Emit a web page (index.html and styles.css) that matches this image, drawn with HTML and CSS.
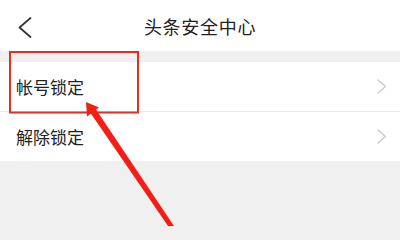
FILE: index.html
```html
<!DOCTYPE html>
<html lang="zh-CN">
<head>
<meta charset="utf-8">
<title>头条安全中心</title>
<link rel="stylesheet" href="styles.css">
</head>
<body>
<div class="page">
  <header class="topbar">
    <svg class="back" width="14" height="22" viewBox="0 0 14 22">
      <polyline points="12.5,1 1.5,10.5 12.5,20" fill="none" stroke="#333" stroke-width="1.7" stroke-linecap="round" stroke-linejoin="round"/>
    </svg>
    <div class="title">头条安全中心</div>
  </header>
  <div class="gap"></div>
  <ul class="list">
    <li class="row"><span class="label">帐号锁定</span>
      <svg class="chev" width="10" height="15" viewBox="0 0 10 15"><polyline points="1,1 8.5,7.5 1,14" fill="none" stroke="#c9c9c9" stroke-width="1.3" stroke-linecap="round" stroke-linejoin="round"/></svg>
    </li>
    <li class="row"><span class="label">解除锁定</span>
      <svg class="chev" width="10" height="15" viewBox="0 0 10 15"><polyline points="1,1 8.5,7.5 1,14" fill="none" stroke="#c9c9c9" stroke-width="1.3" stroke-linecap="round" stroke-linejoin="round"/></svg>
    </li>
  </ul>
  <svg class="annot" width="400" height="226" viewBox="0 0 400 226">
    <rect x="10" y="52" width="128" height="60.5" fill="none" stroke="#dc3129" stroke-width="2"/>
    <polygon points="90.5,113 96,109.5 174,226 168,226" fill="#f21f18"/>
    <polygon points="86,102 99,107.5 87,116.5" fill="#f21f18"/>
  </svg>
</div>
</body>
</html>
```

FILE: styles.css
```css
html, body {
  margin: 0;
  padding: 0;
}
body {
  width: 400px;
  height: 226px;
  overflow: hidden;
  background: #f0f0f0;
  font-family: "Noto Sans CJK SC", "Noto Sans", sans-serif;
  color: #222;
}
.page {
  position: relative;
  width: 400px;
  height: 226px;
}
.topbar {
  position: relative;
  height: 51px;
  background: #fff;
  display: flex;
  align-items: center;
  justify-content: center;
}
.back {
  position: absolute;
  left: 18px;
  top: 17px;
}
.title {
  font-size: 18px;
  letter-spacing: 0.7px;
  line-height: 1;
  margin-top: 1px;
  color: #222;
}
.gap {
  height: 11px;
}
.list {
  list-style: none;
  margin: 0;
  padding: 0;
  background: #fff;
}
.row {
  height: 49px;
  display: flex;
  align-items: center;
  justify-content: space-between;
  padding: 0 13px 0 16px;
}
.row + .row {
  border-top: 1px solid #e9e9e9;
}
.label {
  font-size: 17px;
  line-height: 1;
  color: #222;
}
.chev {
  display: block;
}
.annot {
  position: absolute;
  left: 0;
  top: 0;
  pointer-events: none;
}
```
